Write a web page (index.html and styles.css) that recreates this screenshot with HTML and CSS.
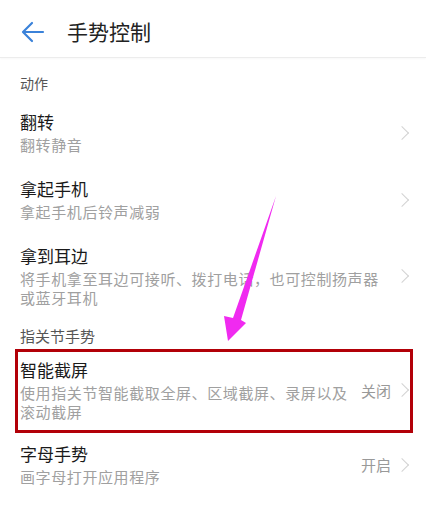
FILE: index.html
```html
<!DOCTYPE html>
<html lang="zh-CN">
<head>
    <meta charset="UTF-8">
    <meta name="viewport" content="width=device-width, initial-scale=1.0">
    <title>手势控制</title>
    <link rel="stylesheet" href="styles.css">
</head>
<body>
    <div class="page">
        <header class="header">
            <svg class="back" width="24" height="22" viewBox="0 0 24 22">
                <path d="M22 11H3M11 2L2 11l9 9" fill="none" stroke="#3b82d9" stroke-width="2.2" stroke-linecap="round" stroke-linejoin="round"/>
            </svg>
            <h1>手势控制</h1>
        </header>

        <div class="section first">动作</div>
        <div class="row">
            <div class="text">
                <div class="title">翻转</div>
                <div class="sub">翻转静音</div>
            </div>
            <span class="chevron"></span>
        </div>
        <div class="row">
            <div class="text">
                <div class="title">拿起手机</div>
                <div class="sub">拿起手机后铃声减弱</div>
            </div>
            <span class="chevron"></span>
        </div>
        <div class="row">
            <div class="text">
                <div class="title">拿到耳边</div>
                <div class="sub">将手机拿至耳边可接听、拨打电话，也可控制扬声器<br>或蓝牙耳机</div>
            </div>
            <span class="chevron"></span>
        </div>

        <div class="section second">指关节手势</div>
        <div class="row">
            <div class="text">
                <div class="title">智能截屏</div>
                <div class="sub">使用指关节智能截取全屏、区域截屏、录屏以及<br>滚动截屏</div>
            </div>
            <span class="value">关闭</span>
            <span class="chevron"></span>
        </div>
        <div class="row last">
            <div class="text">
                <div class="title">字母手势</div>
                <div class="sub">画字母打开应用程序</div>
            </div>
            <span class="value">开启</span>
            <span class="chevron"></span>
        </div>

        <!-- annotation drawn over the screenshot -->
        <div class="mark-box"></div>
        <svg class="mark-arrow" width="426" height="512" viewBox="0 0 426 512">
            <polygon points="276,196 241,320 246,323 228,341 224,316 233,318" fill="#f02af0"/>
        </svg>
    </div>
</body>
</html>
```

FILE: styles.css
```css
body, html {
    margin: 0;
    padding: 0;
    background-color: #fff;
    font-family: "Noto Sans CJK SC", "Noto Sans", sans-serif;
    color: #1a1a1a;
}

.page {
    position: relative;
    width: 426px;
    height: 512px;
    overflow: hidden;
}

.header {
    display: flex;
    align-items: center;
    height: 57px;
    border-bottom: 1px solid #ececec;
    box-shadow: 0 1px 2px rgba(0, 0, 0, 0.03);
    box-sizing: content-box;
}

.back {
    margin-left: 21px;
    margin-top: 6px;
}

h1 {
    margin: 4px 0 0 22px;
    font-size: 21px;
    font-weight: normal;
    color: #222;
}

.section {
    padding-left: 20px;
    font-size: 14px;
    line-height: 20px;
    color: #555;
}

.section.first {
    padding-top: 15px;
    padding-bottom: 6px;
}

.section.second {
    padding-top: 7px;
    padding-bottom: 1px;
    font-size: 15px;
}

.row {
    display: flex;
    align-items: center;
    padding: 12px 16px 12px 20px;
}

.row.last {
    padding-top: 10px;
}

.text {
    flex: 1;
}

.title {
    font-size: 17px;
    line-height: 22px;
    color: #1a1a1a;
}

.sub {
    margin-top: 2px;
    font-size: 15px;
    line-height: 19px;
    color: #a0a0a0;
    letter-spacing: 0.6px;
}

.value {
    margin-right: 8px;
    font-size: 15px;
    color: #999;
}

.chevron {
    width: 9px;
    height: 9px;
    margin-right: 3px;
    margin-left: -2px;
    border-top: 1.5px solid #d2d2d2;
    border-right: 1.5px solid #d2d2d2;
    transform: rotate(45deg);
}

.mark-box {
    position: absolute;
    left: 15px;
    top: 349px;
    width: 392px;
    height: 78px;
    border: 3px solid #b20008;
}

.mark-arrow {
    position: absolute;
    left: 0;
    top: 0;
    pointer-events: none;
}
```
